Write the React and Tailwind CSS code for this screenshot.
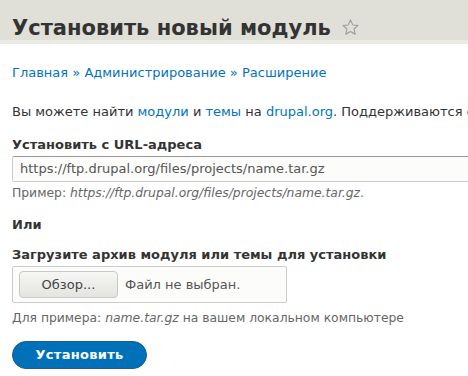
export default function App() {
  const font = { fontFamily: '"DejaVu Sans", sans-serif' }
  return (
    <div className="w-[468px] h-[376px] overflow-hidden bg-white text-[#333]" style={font}>
      {/* Page title */}
      <div className="bg-[#e0e0d8] border-b-4 border-[#ebebe5] h-[44px] pl-3 pt-[18px]">
        <h1 className="text-[21px] font-bold text-[#333] leading-none flex items-center">
          Установить новый модуль
          <svg className="ml-[10px] w-[19px] h-[19px] -mt-[2px]" viewBox="0 0 24 24" fill="none" stroke="#999" strokeWidth="1.3" strokeLinejoin="round">
            <path d="M12 2.5l2.9 6.2 6.6.7-5 4.5 1.4 6.6L12 17.1l-5.9 3.4 1.4-6.6-5-4.5 6.6-.7z" />
          </svg>
        </h1>
      </div>

      <div className="px-3 whitespace-nowrap">
        {/* Breadcrumb */}
        <div className="mt-[21px] text-[13px] leading-[16px] text-[#0074bd]">
          <a>Главная</a> <span>»</span> <a>Администрирование</a> <span>»</span> <a>Расширение</a>
        </div>

        {/* Help text */}
        <p className="mt-[23px] text-[13px] leading-[16px] text-[#333]">
          Вы можете найти <a className="text-[#0074bd]">модули</a> и <a className="text-[#0074bd]">темы</a> на{' '}
          <a className="text-[#0074bd]">drupal.org</a>. Поддерживаются следующие типы файлов: tar tgz gz bz2
        </p>

        {/* URL field */}
        <div className="mt-[17px]">
          <label className="block text-[13px] leading-[16px] font-bold text-[#333]">Установить с URL-адреса</label>
          <div className="mt-[3px] w-[480px] h-[26px] border border-[#ccc] border-t-[#999] rounded-[2px] bg-[#fcfcfa] flex items-center pl-[7px] text-[13px] text-[#555]">
            https://ftp.drupal.org/files/projects/name.tar.gz
          </div>
          <div className="mt-[4px] text-[12.35px] leading-[15px] text-[#666]">
            Пример: <em>https://ftp.drupal.org/files/projects/name.tar.gz</em>.
          </div>
        </div>

        {/* Or */}
        <div className="mt-[16px] text-[13px] leading-[16px] font-bold text-[#333]">Или</div>

        {/* Upload field */}
        <div className="mt-[14px]">
          <label className="block text-[13px] leading-[16px] font-bold text-[#333]">Загрузите архив модуля или темы для установки</label>
          <div className="mt-[3px] w-[275px] h-[37px] border border-[#ccc] bg-[#fcfcfa] rounded-[2px] flex items-center pl-[6px] text-[13px] text-[#555]">
            <span className="w-[99px] h-[27px] rounded-[4px] border border-[#c8c8c8] bg-gradient-to-b from-[#f6f6f4] to-[#e4e4e0] flex items-center justify-center text-[#444]">
              Обзор...
            </span>
            <span className="ml-[7px]">Файл не выбран.</span>
          </div>
          <div className="mt-[8px] text-[12.35px] leading-[15px] text-[#666]">
            Для примера: <em>name.tar.gz</em> на вашем локальном компьютере
          </div>
        </div>

        {/* Submit */}
        <button className="mt-[15px] w-[135px] h-[28px] rounded-full bg-[#0071b8] border border-[#1e5c90] text-white text-[13px] font-bold flex items-center justify-center tracking-[0.3px]">
          Установить
        </button>
      </div>
    </div>
  )
}
